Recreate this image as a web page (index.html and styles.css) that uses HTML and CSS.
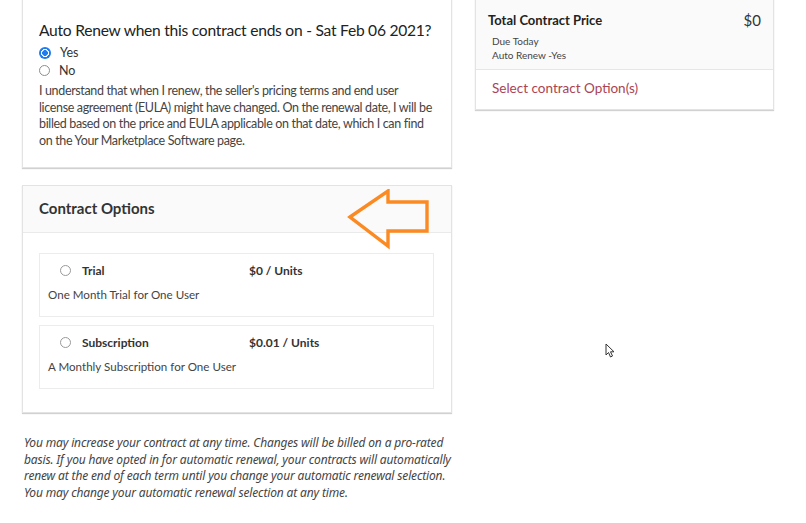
FILE: index.html
```html
<!DOCTYPE html>
<html>
<head>
<meta charset="utf-8">
<link rel="stylesheet" href="styles.css">
</head>
<body>
<div class="page">
  <div class="left">
    <section class="card renew">
      <h2 class="renew-title">Auto Renew when this contract ends on - Sat Feb 06 2021?</h2>
      <div class="radio-row"><span class="radio checked"></span><span>Yes</span></div>
      <div class="radio-row"><span class="radio"></span><span>No</span></div>
      <p class="renew-text">I understand that when I renew, the seller's pricing terms and end user license agreement (EULA) might have changed. On the renewal date, I will be billed based on the price and EULA applicable on that date, which I can find on the Your Marketplace Software page.</p>
    </section>

    <section class="card options">
      <div class="card-head">
        <h3 class="head-title">Contract Options</h3>
        <svg class="arrow" width="86" height="62" viewBox="0 0 86 62">
          <polygon points="3,28 41,2 41,13 80,13 80,42 41,42 41,57" fill="none" stroke="#fb8a22" stroke-width="3.4" stroke-linejoin="miter"/>
        </svg>
      </div>
      <div class="card-body">
        <div class="option">
          <div class="option-top">
            <span class="radio small"></span>
            <span class="opt-name">Trial</span>
            <span class="opt-price">$0 / Units</span>
          </div>
          <div class="opt-desc">One Month Trial for One User</div>
        </div>
        <div class="option">
          <div class="option-top">
            <span class="radio small"></span>
            <span class="opt-name">Subscription</span>
            <span class="opt-price">$0.01 / Units</span>
          </div>
          <div class="opt-desc">A Monthly Subscription for One User</div>
        </div>
      </div>
    </section>

    <p class="note">You may increase your contract at any time. Changes will be billed on a pro-rated basis. If you have opted in for automatic renewal, your contracts will automatically renew at the end of each term until you change your automatic renewal selection. You may change your automatic renewal selection at any time.</p>
  </div>

  <div class="right">
    <section class="card summary">
      <div class="sum-head">
        <div class="sum-row">
          <span class="sum-title">Total Contract Price</span>
          <span class="sum-price">$0</span>
        </div>
        <div class="sum-sub">Due Today</div>
        <div class="sum-sub">Auto Renew -Yes</div>
      </div>
      <div class="sum-body">Select contract Option(s)</div>
    </section>
  </div>
</div>
<svg class="cursor" width="12" height="16" viewBox="0 0 12 16">
  <path d="M1 1 L1 12 L3.5 9.5 L5.5 14 L7.5 13 L5.5 8.8 L9 8.8 Z" fill="#fff" stroke="#333" stroke-width="1"/>
</svg>
</body>
</html>
```

FILE: styles.css
```css
* { box-sizing: border-box; }
html, body { margin: 0; padding: 0; background: #fff; overflow: hidden; }
body {
  font-family: Lato, "Open Sans", sans-serif;
  color: #333;
  width: 806px;
  height: 523px;
  position: relative;
}
.page {
  display: flex;
  align-items: flex-start;
  padding-left: 22px;
  gap: 23px;
}
.left { width: 430px; display: flex; flex-direction: column; }
.right { width: 299px; }

.card {
  background: #fff;
  border: 1px solid #e3e3e3;
  box-shadow: 0 1px 1px rgba(0,0,0,0.18);
}

.renew {
  margin-top: -12px;
  padding: 31px 16px 19px 16px;
  height: 180px;
}
.renew-title {
  margin: 0 0 4px 0;
  font-weight: 400;
  font-size: 15.6px;
  letter-spacing: -0.25px;
  line-height: 20px;
  color: #222;
  white-space: nowrap;
}
.radio-row {
  display: flex;
  align-items: center;
  gap: 9px;
  height: 17.5px;
  font-size: 12.5px;
  color: #333;
}
.radio {
  display: inline-block;
  width: 11px;
  height: 11px;
  border-radius: 50%;
  border: 1px solid #8d8d8d;
  background: #fff;
  flex: none;
}
.radio.checked {
  border: none;
  width: 12px;
  height: 12px;
  background: radial-gradient(circle, #1f7bf0 0 2.6px, #fff 3.1px 3.8px, #1f7bf0 4.2px);
}
.renew-text {
  margin: 4px 0 0 0;
  font-size: 12.5px;
  letter-spacing: -0.35px;
  line-height: 16.5px;
  color: #444;
}

.options { margin-top: 17px; }
.card-head {
  position: relative;
  background: #fafafa;
  border-bottom: 1px solid #eaeaea;
  height: 47px;
  padding: 0 16px 2px 16px;
  display: flex;
  align-items: center;
}
.head-title {
  margin: 0;
  font-size: 15px;
  font-weight: 700;
  color: #333;
}
.arrow {
  position: absolute;
  left: 324px;
  top: 3px;
}
.card-body {
  padding: 20px 17px 23px 16px;
  display: flex;
  flex-direction: column;
  gap: 8px;
}
.option {
  border: 1px solid #ececec;
  height: 64px;
  padding: 8px 9px 0 8px;
}
.option-top {
  display: flex;
  align-items: center;
  height: 16px;
  font-size: 12px;
  font-weight: 700;
  color: #333;
}
.radio.small { margin-left: 12px; margin-right: 11px; width: 11px; height: 11px; border-color: #999; }
.opt-name { width: 167px; }
.opt-desc {
  margin-top: 10px;
  font-size: 11.6px;
  color: #444;
}

.note {
  margin: 22px 0 0 2px;
  font-family: "Noto Sans", "Open Sans", sans-serif;
  font-style: italic;
  font-size: 12px;
  letter-spacing: -0.15px;
  line-height: 16.5px;
  color: #444;
  width: 440px;
}

.summary { margin-top: -12px; }
.sum-head {
  background: #fafafa;
  border-bottom: 1px solid #e6e6e6;
  padding: 22px 12px 7px 12px;
}
.sum-row {
  display: flex;
  justify-content: space-between;
  align-items: center;
  margin-bottom: 5px;
}
.sum-title { font-size: 13px; font-weight: 700; color: #222; }
.sum-price { font-size: 15px; color: #333; }
.sum-sub {
  font-size: 10px;
  line-height: 14px;
  color: #444;
  padding-left: 4px;
}
.sum-body {
  padding: 10px 16px 13px 16px;
  font-size: 13.5px;
  color: #ab4352;
}

.cursor {
  position: absolute;
  left: 605px;
  top: 343px;
}
```
